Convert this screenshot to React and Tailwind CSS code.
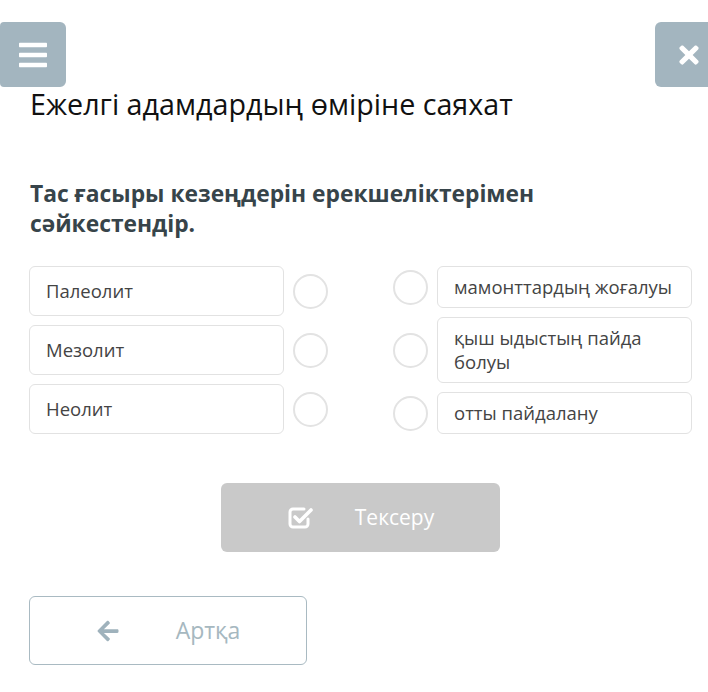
import React from 'react';
import { FaBars, FaTimes, FaArrowLeft } from 'react-icons/fa';

const leftItems = ['Палеолит', 'Мезолит', 'Неолит'];
const rightItems = ['мамонттардың жоғалуы', 'қыш ыдыстың пайда болуы', 'отты пайдалану'];

const Circle = () => (
  <div className="w-[35px] h-[35px] shrink-0 rounded-full border-2 border-[#e3e3e3] bg-white" />
);

const CheckSquare = () => (
  <svg width="26" height="24" viewBox="0 0 26 24" fill="none">
    <path d="M17 3H6a3 3 0 0 0-3 3v12a3 3 0 0 0 3 3h12a3 3 0 0 0 3-3v-5" stroke="white" strokeWidth="3" strokeLinecap="round" />
    <path d="M8 11l4.5 4.5L24 4" stroke="white" strokeWidth="3.6" strokeLinecap="round" strokeLinejoin="round" />
  </svg>
);

const App = () => {
  return (
    <div className="relative w-[708px] h-[692px] bg-white overflow-hidden font-['Open_Sans',sans-serif]">
      <button className="absolute left-0 top-[22px] w-[66px] h-[65px] rounded-r-md rounded-l-sm bg-[#a3b5bf] flex items-center justify-center">
        <FaBars className="text-white w-[32px] h-[32px]" />
      </button>
      <button className="absolute left-[655px] top-[22px] w-[60px] h-[65px] rounded-md bg-[#a3b5bf] flex items-center pl-[20px]">
        <FaTimes className="text-white w-[28px] h-[28px]" />
      </button>

      <div className="pt-[85px] pl-[29px] pr-[16px]">
        <h1 className="text-[28.7px] leading-[38px] font-normal text-[#111] pl-px">Ежелгі адамдардың өміріне саяхат</h1>
        <h2 className="mt-[56px] max-w-[560px] text-[22.8px] leading-[30px] font-bold text-[#37444a] pl-px">
          Тас ғасыры кезеңдерін ерекшеліктерімен сәйкестендір.
        </h2>

        <div className="mt-[27px] flex justify-between">
          <div className="flex flex-col gap-[9px]">
            {leftItems.map((t) => (
              <div key={t} className="flex items-center gap-[9px]">
                <div className="w-[255px] min-h-[50px] flex items-center rounded-md border border-[#e2e2e2] px-[16px] text-[18.5px] leading-[24px] text-[#444]">
                  {t}
                </div>
                <Circle />
              </div>
            ))}
          </div>
          <div className="flex flex-col gap-[9px]">
            {rightItems.map((t) => (
              <div key={t} className="flex items-center gap-[9px]">
                <Circle />
                <div className="w-[255px] flex items-center rounded-md border border-[#e2e2e2] px-[16px] py-[8px] text-[18.5px] leading-[24px] text-[#444]">
                  {t}
                </div>
              </div>
            ))}
          </div>
        </div>

        <div className="mt-[49px] flex justify-center">
          <button className="w-[279px] h-[69px] rounded-md bg-[#c9c9c9] flex items-center justify-center gap-[42px] text-white text-[21px]">
            <CheckSquare />
            <span>Тексеру</span>
          </button>
        </div>

        <button className="mt-[44px] w-[278px] h-[69px] rounded-md border border-[#a9bac2] bg-white flex items-center justify-center gap-[56px] text-[#a6b8c0] text-[23px]">
          <FaArrowLeft className="text-[#9fb2bc] w-[24px] h-[24px]" />
          <span>Артқа</span>
        </button>
      </div>
    </div>
  );
};

export default App;
